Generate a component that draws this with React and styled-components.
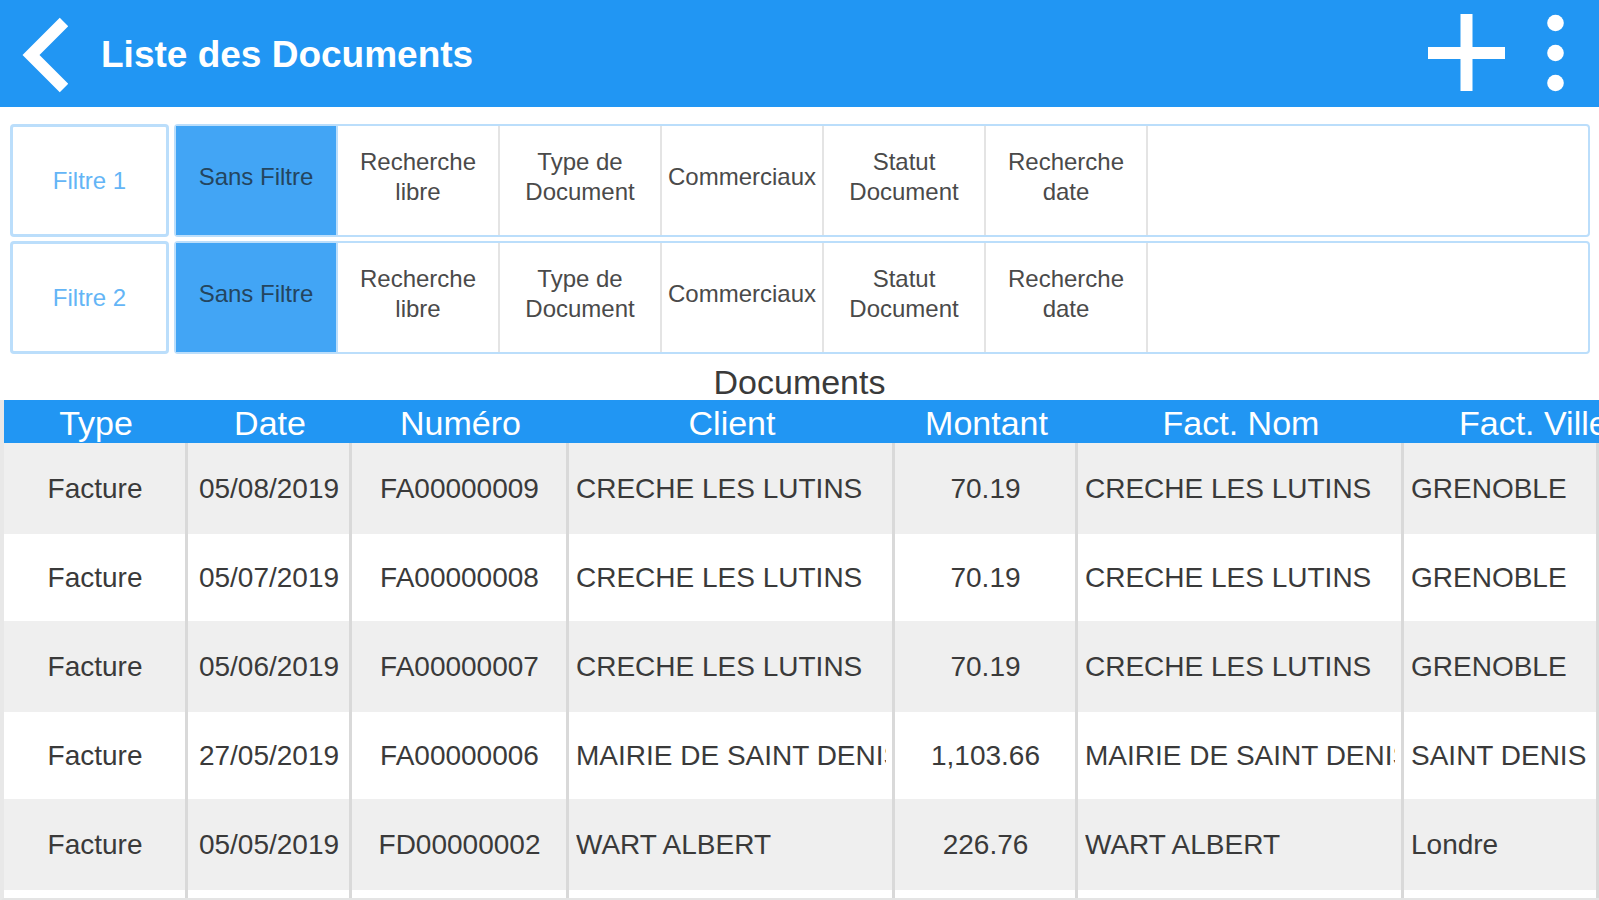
import React, { useState } from 'react'
import styled, { createGlobalStyle } from 'styled-components';

const GlobalStyle = createGlobalStyle`
    * {
        box-sizing: border-box;
    }

    body {
        margin: 0;
        background: #fff;
        color: #3a3a3a;
        font-family: "Liberation Sans", Arial, Helvetica, sans-serif;
    }
`;

const Page = styled.div`
    min-height: 100vh;
    display: flex;
    flex-direction: column;
`;

const TopBar = styled.header`
    height: 107px;
    flex-shrink: 0;
    display: flex;
    align-items: center;
    padding: 0 33px 0 20px;
    background: #2196f3;
    color: #fff;
`;

const IconButton = styled.button`
    display: flex;
    padding: 0;
    border: none;
    background: none;
    color: inherit;
    cursor: pointer;
`;

const Title = styled.h1`
    flex: 1;
    margin: 0;
    padding: 2px 0 0 33px;
    font-size: 37px;
    font-weight: bold;
`;

const Actions = styled.div`
    display: flex;
    gap: 39px;
`;

const Filters = styled.section`
    display: flex;
    flex-direction: column;
    gap: 4px;
    padding: 17px 9px 0 10px;
`;

const FilterRow = styled.div`
    display: flex;
    gap: 5px;
    height: 113px;
`;

const FilterName = styled.div`
    width: 159px;
    display: flex;
    align-items: center;
    justify-content: center;
    border: 3px solid #bbdefb;
    border-radius: 4px;
    color: #64b5f6;
    font-size: 24px;
`;

const FilterGroup = styled.div`
    flex: 1;
    display: flex;
    border: 2px solid #bbdefb;
    border-radius: 4px;
`;

const FilterButton = styled.button`
    width: 162px;
    padding: 0 2px 8px;
    border: none;
    border-right: 2px solid ${props => props.$active ? '#bbdefb' : '#e4e4e4'};
    background: ${props => props.$active ? '#42a5f5' : '#fff'};
    color: ${props => props.$active ? '#24455f' : '#4a4a4a'};
    font-family: inherit;
    font-size: 24px;
    line-height: 30px;
    cursor: pointer;
`;

const TableTitle = styled.h2`
    margin: 0;
    padding-top: 10px;
    font-size: 34px;
    font-weight: normal;
    line-height: 36px;
    text-align: center;
`;

const TableBox = styled.div`
    flex: 1;
    overflow: hidden;
    border-left: 4px solid #e8e8e8;
    border-bottom: 3px solid #e4e4e4;
`;

const Table = styled.table`
    width: 100%;
    table-layout: fixed;
    border-collapse: separate;
    border-spacing: 0;
`;

const Col = styled.col`
    width: ${props => props.$width ? props.$width + 'px' : 'auto'};
`;

const HeadRow = styled.tr`
    height: 43px;
    background: #2196f3;
    color: #fff;
`;

const HeadCell = styled.th`
    padding: ${props => props.$wide ? '3px 0 0 55px' : '3px 0 0'};
    font-size: 34px;
    font-weight: normal;
    line-height: 40px;
    text-align: ${props => props.$wide ? 'left' : 'center'};
    white-space: nowrap;
`;

const Row = styled.tr`
    height: 87px;

    &:nth-child(odd) {
        height: 91px;
        background: #efefef;
    }
`;

const LastRow = styled.tr`
    height: 8px;
`;

const Cell = styled.td`
    padding: 0 6px 0 7px;
    border-right: 3px solid #d9d9d9;
    font-size: 28px;
    text-align: ${props => props.$left ? 'left' : 'center'};
`;

const CellText = styled.div`
    overflow: hidden;
    white-space: nowrap;
`;

const filterOptions = [
    'Sans Filtre',
    'Recherche libre',
    'Type de Document',
    'Commerciaux',
    'Statut Document',
    'Recherche date',
];

const columns = [
    { key: 'type', label: 'Type', width: 184 },
    { key: 'date', label: 'Date', width: 164 },
    { key: 'numero', label: 'Numéro', width: 217 },
    { key: 'client', label: 'Client', width: 326, left: true },
    { key: 'montant', label: 'Montant', width: 183 },
    { key: 'nom', label: 'Fact. Nom', width: 326, left: true },
    { key: 'ville', label: 'Fact. Ville', left: true, wide: true },
];

const documents = [
    { type: 'Facture', date: '05/08/2019', numero: 'FA00000009', client: 'CRECHE LES LUTINS', montant: '70.19', nom: 'CRECHE LES LUTINS', ville: 'GRENOBLE' },
    { type: 'Facture', date: '05/07/2019', numero: 'FA00000008', client: 'CRECHE LES LUTINS', montant: '70.19', nom: 'CRECHE LES LUTINS', ville: 'GRENOBLE' },
    { type: 'Facture', date: '05/06/2019', numero: 'FA00000007', client: 'CRECHE LES LUTINS', montant: '70.19', nom: 'CRECHE LES LUTINS', ville: 'GRENOBLE' },
    { type: 'Facture', date: '27/05/2019', numero: 'FA00000006', client: 'MAIRIE DE SAINT DENIS', montant: '1,103.66', nom: 'MAIRIE DE SAINT DENIS', ville: 'SAINT DENIS' },
    { type: 'Facture', date: '05/05/2019', numero: 'FD00000002', client: 'WART ALBERT', montant: '226.76', nom: 'WART ALBERT', ville: 'Londre' },
];

function Filter({ name }) {

    const [selected, setSelected] = useState('Sans Filtre');

    return (
        <FilterRow role="group" aria-label={name}>
            <FilterName>{name}</FilterName>
            <FilterGroup>
                {filterOptions.map((option) => (
                    <FilterButton
                        key={option}
                        type="button"
                        $active={option === selected}
                        aria-pressed={option === selected}
                        onClick={() => setSelected(option)}
                    >
                        {option}
                    </FilterButton>
                ))}
            </FilterGroup>
        </FilterRow>
    )
}

function App() {
    return (
        <>
            <GlobalStyle />
            <Page>
                <TopBar>
                    <IconButton type="button" aria-label="Retour">
                        <svg width="48" height="81" viewBox="0 0 48 81" fill="none" stroke="currentColor" strokeWidth="12">
                            <path d="M44 9 L11 42 L44 75" />
                        </svg>
                    </IconButton>
                    <Title>Liste des Documents</Title>
                    <Actions>
                        <IconButton type="button" aria-label="Ajouter">
                            <svg width="81" height="81" viewBox="0 0 81 81" fill="none" stroke="currentColor" strokeWidth="12">
                                <path d="M2 40 H79 M40.500 1 V78" />
                            </svg>
                        </IconButton>
                        <IconButton type="button" aria-label="Menu">
                            <svg width="20" height="81" viewBox="0 0 20 81" fill="currentColor">
                                <circle cx="9.500" cy="10" r="8.300" />
                                <circle cx="9.500" cy="40" r="8.300" />
                                <circle cx="9.500" cy="70" r="8.300" />
                            </svg>
                        </IconButton>
                    </Actions>
                </TopBar>

                <Filters>
                    <Filter name="Filtre 1" />
                    <Filter name="Filtre 2" />
                </Filters>

                <TableTitle id="documents">Documents</TableTitle>
                <TableBox>
                    <Table aria-labelledby="documents">
                        <colgroup>
                            {columns.map((col) => <Col key={col.key} $width={col.width} />)}
                        </colgroup>
                        <thead>
                            <HeadRow>
                                {columns.map((col) => (
                                    <HeadCell key={col.key} scope="col" $wide={col.wide}>{col.label}</HeadCell>
                                ))}
                            </HeadRow>
                        </thead>
                        <tbody>
                            {documents.map((doc) => (
                                <Row key={doc.numero}>
                                    {columns.map((col) => (
                                        <Cell key={col.key} $left={col.left}>
                                            <CellText>{doc[col.key]}</CellText>
                                        </Cell>
                                    ))}
                                </Row>
                            ))}
                            <LastRow>
                                {columns.map((col) => <Cell key={col.key} />)}
                            </LastRow>
                        </tbody>
                    </Table>
                </TableBox>
            </Page>
        </>
    )
}

export default App
